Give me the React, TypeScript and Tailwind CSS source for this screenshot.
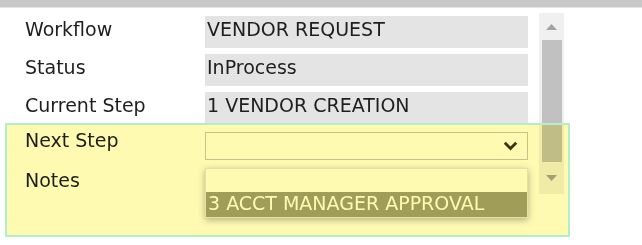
import React from "react";

const rows = [
  { label: "Workflow", value: "VENDOR REQUEST" },
  { label: "Status", value: "InProcess" },
  { label: "Current Step", value: "1 VENDOR CREATION" },
];

export default function App() {
  return (
    <div className="relative w-[642px] h-[245px] bg-white overflow-hidden font-['DejaVu_Sans',_Verdana,_sans-serif] text-[19px] leading-[22px] text-[#1e1e1e]">
      <div className="h-[7px] bg-[#c8c8c8]" />
      <div className="h-[1px] bg-[#e1e6ec]" />
      <div className="flex pt-[5px]">
        <div className="w-[539px] flex flex-col">
          <div className="flex flex-col gap-[6px] pt-[3px]">
            {rows.map((r) => (
              <div key={r.label} className="flex items-start">
                <div className="w-[205px] pl-[25px] pt-[2px]">{r.label}</div>
                <div className="w-[323px] h-[32px] bg-[#e4e4e4] pl-[2px] pt-[2px]">{r.value}</div>
              </div>
            ))}
          </div>
          <div className="flex items-start mt-[5px]">
            <div className="w-[205px] pl-[25px]">Next Step</div>
            <div className="mt-[3px] w-[323px] h-[28px] border border-[#c6c6c6] bg-white flex items-center justify-end pr-[9px]">
              <svg width="15" height="10" viewBox="0 0 15 10">
                <path d="M1.8 1.8 L7.5 7.5 L13.2 1.8" fill="none" stroke="#35350f" strokeWidth="2.8" />
              </svg>
            </div>
          </div>
          <div className="flex items-start mt-[8px]">
            <div className="w-[205px] pl-[25px] pt-[1px]">Notes</div>
            <div className="relative w-[323px] h-[50px]">
              <div className="absolute left-0 top-0 w-[323px] bg-white shadow-[0_2px_7px_rgba(0,0,0,0.3)] border border-[#e6e6e6]">
                <div className="h-[23px]" />
                <div className="h-[25px] bg-[#a0a080] text-white pl-[2px] whitespace-nowrap">3 ACCT MANAGER APPROVAL</div>
              </div>
            </div>
          </div>
        </div>
        <div className="w-[25px] h-[181px] bg-[#f0f0f0] flex flex-col items-center">
          <div className="h-[27px] w-full flex items-center justify-center">
            <svg width="11" height="6" viewBox="0 0 11 6">
              <path d="M0 6 L5.5 0 L11 6 Z" fill="#a3a3a3" />
            </svg>
          </div>
          <div className="w-[20px] h-[122px] bg-[#c1c1c1]" />
          <div className="flex-1 w-full flex items-center justify-center">
            <svg width="11" height="6" viewBox="0 0 11 6">
              <path d="M0 0 L5.5 6 L11 0 Z" fill="#a3a3a3" />
            </svg>
          </div>
        </div>
      </div>
      <div className="absolute left-[5px] top-[123px] w-[565px] h-[114px] border-2 border-[#b4edca] pointer-events-none">
        <div className="w-full h-full bg-[#fffab2] mix-blend-multiply" />
      </div>
    </div>
  );
}
